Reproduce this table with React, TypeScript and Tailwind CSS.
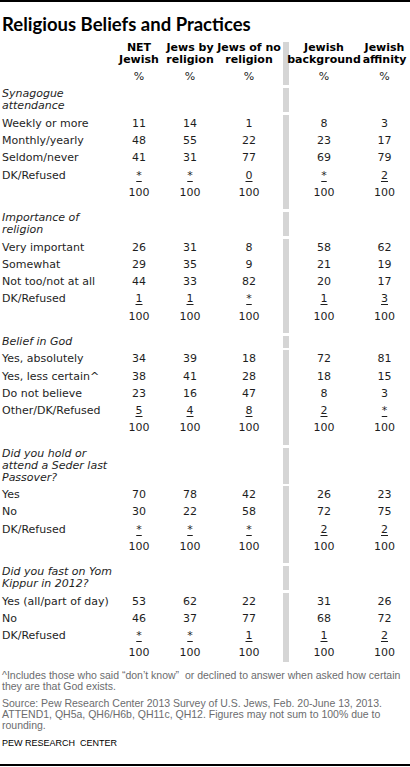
const GRID = "grid grid-cols-[113px_52px_50px_68px_6px_70px_51px]";

type Section = { heading: string[]; rows: string[][] };

const HEADERS = [
  ["NET", "Jewish"],
  ["Jews by", "religion"],
  ["Jews of no", "religion"],
  ["Jewish", "background"],
  ["Jewish", "affinity"],
];

const SECTIONS: Section[] = [
  {
    heading: ["Synagogue", "attendance"],
    rows: [
      ["Weekly or more", "11", "14", "1", "8", "3"],
      ["Monthly/yearly", "48", "55", "22", "23", "17"],
      ["Seldom/never", "41", "31", "77", "69", "79"],
      ["DK/Refused", "*", "*", "0", "*", "2"],
    ],
  },
  {
    heading: ["Importance of", "religion"],
    rows: [
      ["Very important", "26", "31", "8", "58", "62"],
      ["Somewhat", "29", "35", "9", "21", "19"],
      ["Not too/not at all", "44", "33", "82", "20", "17"],
      ["DK/Refused", "1", "1", "*", "1", "3"],
    ],
  },
  {
    heading: ["Belief in God"],
    rows: [
      ["Yes, absolutely", "34", "39", "18", "72", "81"],
      ["Yes, less certain^", "38", "41", "28", "18", "15"],
      ["Do not believe", "23", "16", "47", "8", "3"],
      ["Other/DK/Refused", "5", "4", "8", "2", "*"],
    ],
  },
  {
    heading: ["Did you hold or", "attend a Seder last", "Passover?"],
    rows: [
      ["Yes", "70", "78", "42", "26", "23"],
      ["No", "30", "22", "58", "72", "75"],
      ["DK/Refused", "*", "*", "*", "2", "2"],
    ],
  },
  {
    heading: ["Did you fast on Yom", "Kippur in 2012?"],
    rows: [
      ["Yes (all/part of day)", "53", "62", "22", "31", "26"],
      ["No", "46", "37", "77", "68", "72"],
      ["DK/Refused", "*", "*", "1", "1", "2"],
    ],
  },
];

const Bar = () => <div className="bg-[#d5d5d5]" />;

function DataRow({ label, values, under }: { label: string; values: string[]; under?: boolean }) {
  const cell = (v: string, i: number) => (
    <div key={i} className="text-center">
      <span className={under ? "underline underline-offset-[2px]" : ""}>{v}</span>
    </div>
  );
  return (
    <div className={`${GRID} h-[17.25px] leading-[17.25px]`}>
      <div className="pl-[2px] whitespace-nowrap">{label}</div>
      {values.slice(0, 3).map(cell)}
      <Bar />
      {values.slice(3).map((v, i) => cell(v, i + 3))}
    </div>
  );
}

function Spacer({ h }: { h: string }) {
  return (
    <div className={`${GRID} ${h}`}>
      <div />
      <div />
      <div />
      <div />
      <Bar />
      <div />
      <div />
    </div>
  );
}

export default function App() {
  return (
    <div className="w-[410px] h-[767px] bg-white text-[#1e1e1e] font-['DejaVu_Sans',Verdana,sans-serif] text-[11px] flex flex-col overflow-hidden">
      <div className="h-[2px] bg-black" />
      <h1 className="mt-[11px] pl-[2px] font-['Lato',sans-serif] font-bold text-[18.5px] leading-[22px] text-black">
        Religious Beliefs and Practices
      </h1>

      <div className="mt-[6px] flex flex-col">
        {/* column headers */}
        <div className={`${GRID} h-[27px] pt-[1px] font-bold leading-[12px] text-black`}>
          <div />
          {HEADERS.slice(0, 3).map((h, i) => (
            <div key={i} className="flex flex-col items-center whitespace-nowrap">
              {h.map((l) => <span key={l}>{l}</span>)}
            </div>
          ))}
          <Bar />
          {HEADERS.slice(3).map((h, i) => (
            <div key={i} className="flex flex-col items-center whitespace-nowrap">
              {h.map((l) => <span key={l}>{l}</span>)}
            </div>
          ))}
        </div>
        <DataRow label="" values={["%", "%", "%", "%", "%"]} />

        {SECTIONS.map((s, si) => (
          <div key={si} className="flex flex-col">
            {si > 0 && <Spacer h="h-[8px]" />}
            <div className={`${GRID} pt-[3px] pb-[2.5px]`}>
              <div className="pl-[2px] italic leading-[12px] whitespace-nowrap flex flex-col">
                {s.heading.map((l) => <span key={l}>{l}</span>)}
              </div>
              <div />
              <div />
              <div />
              <Bar />
              <div />
              <div />
            </div>
            {s.rows.map((r, ri) => (
              <DataRow key={ri} label={r[0]} values={r.slice(1)} under={ri === s.rows.length - 1} />
            ))}
            <DataRow label="" values={["100", "100", "100", "100", "100"]} />
          </div>
        ))}
      </div>

      <div className="mt-[8px] pl-[2px] font-['Liberation_Sans',Arial,sans-serif] text-[10.5px] leading-[11px] text-[#6b6c6e] whitespace-nowrap">
        <p>^Includes those who said “don’t know”&nbsp; or declined to answer when asked how certain</p>
        <p>they are that God exists.</p>
        <p className="mt-[6px]">Source: Pew Research Center 2013 Survey of U.S. Jews, Feb. 20-June 13, 2013.</p>
        <p>ATTEND1, QH5a, QH6/H6b, QH11c, QH12. Figures may not sum to 100% due to</p>
        <p>rounding.</p>
      </div>
      <p className="mt-[7px] pl-[2px] font-['Liberation_Sans',Arial,sans-serif] text-[9px] leading-[11px] text-black whitespace-pre">
        PEW RESEARCH  CENTER
      </p>
      <div className="mt-auto mb-[1px] h-[2px] bg-black" />
    </div>
  );
}
